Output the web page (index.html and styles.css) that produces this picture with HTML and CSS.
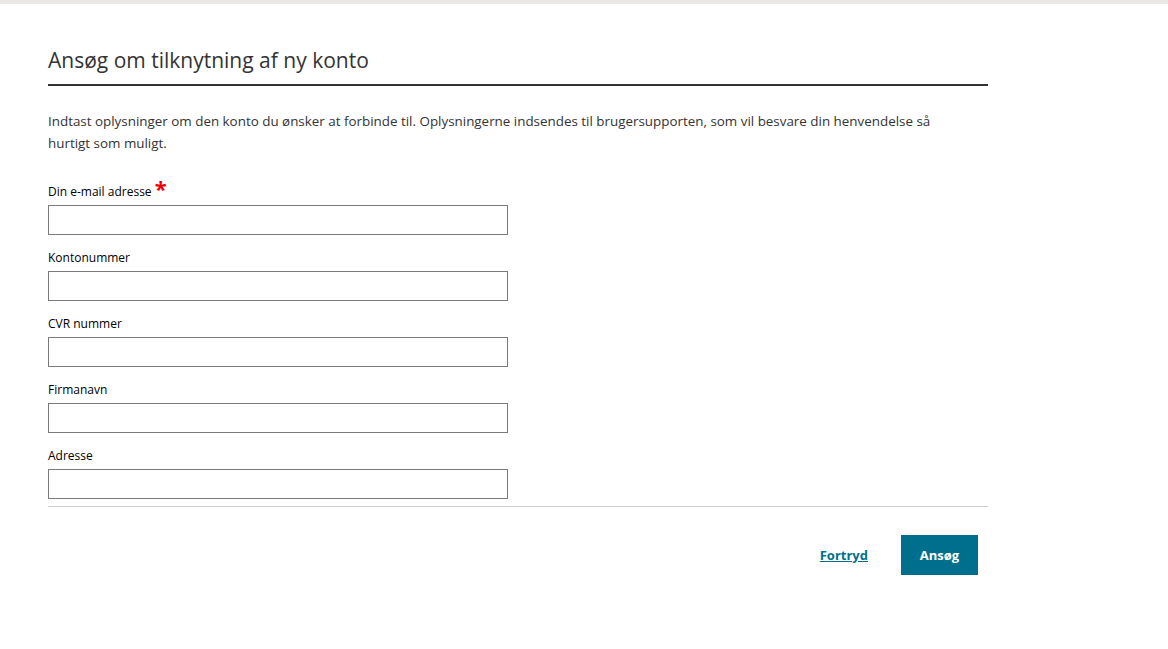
FILE: index.html
```html
<!DOCTYPE html>
<html lang="da">
<head>
<meta charset="utf-8">
<title>Ansøg om tilknytning af ny konto</title>
<link rel="stylesheet" href="styles.css">
</head>
<body>
<div class="topbar"></div>
<main class="dialog">
  <h1 class="title">Ansøg om tilknytning af ny konto</h1>
  <p class="intro">Indtast oplysninger om den konto du ønsker at forbinde til. Oplysningerne indsendes til brugersupporten, som vil besvare din henvendelse så hurtigt som muligt.</p>
  <form class="form">
    <div class="field">
      <label class="label">Din e-mail adresse <span class="req">*</span></label>
      <input class="input" type="text">
    </div>
    <div class="field">
      <label class="label">Kontonummer</label>
      <input class="input" type="text">
    </div>
    <div class="field">
      <label class="label">CVR nummer</label>
      <input class="input" type="text">
    </div>
    <div class="field">
      <label class="label">Firmanavn</label>
      <input class="input" type="text">
    </div>
    <div class="field">
      <label class="label">Adresse</label>
      <input class="input" type="text">
    </div>
    <div class="actions">
      <a class="cancel" href="#">Fortryd</a>
      <button class="submit" type="button">Ansøg</button>
    </div>
  </form>
</main>
</body>
</html>
```

FILE: styles.css
```css
* { box-sizing: border-box; }
html, body { margin: 0; padding: 0; background: #fff; }
body {
  font-family: "Segoe UI", "Open Sans", "Noto Sans", sans-serif;
  color: #333;
}
.topbar {
  height: 4px;
  background: #ebe9e6;
}
.dialog {
  width: 940px;
  margin-left: 48px;
  padding-top: 42px;
}
.title {
  margin: 0;
  font-size: 21px;
  font-weight: 400;
  line-height: 28px;
  color: #333;
  padding-bottom: 10px;
  border-bottom: 2px solid #333;
}
.intro {
  margin: 24px 0 0;
  font-size: 13.4px;
  line-height: 22px;
  width: 900px;
}
.form {
  margin-top: 29px;
}
.field {
  display: flex;
  flex-direction: column;
  width: 460px;
  margin-bottom: 14px;
}
.label {
  font-size: 12px;
  line-height: 18px;
  color: #000;
  margin-bottom: 4px;
}
.req {
  color: #e00;
  font-size: 22px;
  font-weight: 700;
  line-height: 10px;
  vertical-align: -1px;
}
.input {
  height: 30px;
  border: 1px solid #7a7a7a;
  border-radius: 0;
  margin: 0;
  padding: 0 6px;
}
.actions {
  border-top: 1px solid #ccc;
  margin-top: -7px;
  padding: 28px 10px 0 0;
  display: flex;
  justify-content: flex-end;
  align-items: center;
  gap: 33px;
}
.cancel {
  font-size: 13px;
  font-weight: 700;
  color: #00708f;
  text-decoration: underline;
}
.submit {
  width: 77px;
  height: 40px;
  border: 0;
  border-radius: 0;
  background: #006f8e;
  color: #fff;
  font-family: inherit;
  font-size: 13px;
  font-weight: 700;
}
```
